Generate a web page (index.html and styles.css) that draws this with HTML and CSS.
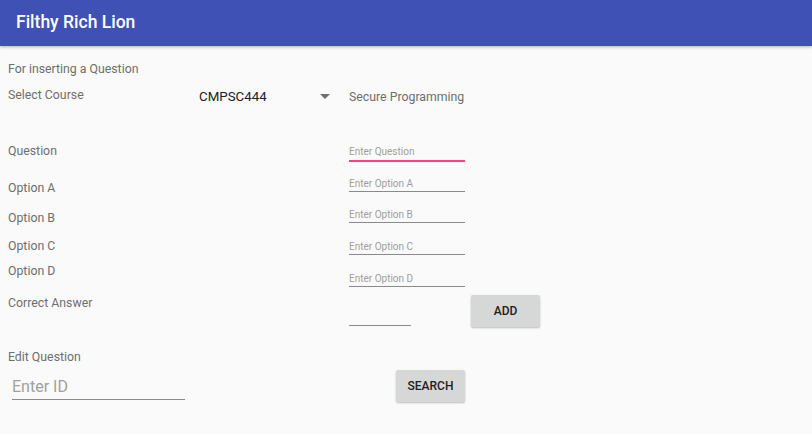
FILE: index.html
```html
<!DOCTYPE html>
<html>
<head>
<meta charset="utf-8">
<link rel="stylesheet" href="styles.css">
</head>
<body>
<header class="appbar"><span class="title">Filthy Rich Lion</span></header>
<main class="content">
  <section class="form">
    <div class="labels">
      <div class="label l-intro">For inserting a Question</div>
      <div class="course-row">
        <div class="label l-course">Select Course</div>
        <div class="spinner">
          <span class="spinner-text">CMPSC444</span>
          <svg class="spinner-arrow" width="10" height="5" viewBox="0 0 10 5"><path d="M0 0 L10 0 L5 5 Z" fill="#6f6f6f"/></svg>
        </div>
      </div>
      <div class="label l-question">Question</div>
      <div class="label l-a">Option A</div>
      <div class="label l-b">Option B</div>
      <div class="label l-c">Option C</div>
      <div class="label l-d">Option D</div>
      <div class="label l-answer">Correct Answer</div>
    </div>
    <div class="fields">
      <div class="course-name">Secure Programming</div>
      <div class="field f-question focused">Enter Question</div>
      <div class="field f-a">Enter Option A</div>
      <div class="field f-b">Enter Option B</div>
      <div class="field f-c">Enter Option C</div>
      <div class="field f-d">Enter Option D</div>
      <div class="answer-row">
        <div class="field f-answer"></div>
        <button class="btn btn-add">ADD</button>
      </div>
    </div>
  </section>
  <section class="edit">
    <div class="label l-edit">Edit Question</div>
    <div class="edit-row">
      <div class="id-field">Enter ID</div>
      <button class="btn btn-search">SEARCH</button>
    </div>
  </section>
</main>
</body>
</html>
```
FILE: styles.css
```css
* { box-sizing: border-box; }
html, body { margin: 0; padding: 0; }
body {
  width: 812px;
  height: 434px;
  overflow: hidden;
  background: #fafafa;
  font-family: Roboto, "Noto Sans", sans-serif;
}
.appbar {
  height: 46px;
  background: #3f51b5;
  display: flex;
  align-items: center;
  padding-left: 16px;
  box-shadow: 0 1px 3px rgba(0,0,0,0.3);
  position: relative;
  z-index: 1;
}
.title {
  color: #fff;
  font-size: 17.5px;
  font-weight: 500;
  margin-top: -3px;
}
.content { display: flex; flex-direction: column; }
.form { display: flex; }
.labels {
  width: 349px;
  padding-left: 8px;
  display: flex;
  flex-direction: column;
}
.label {
  font-size: 12.3px;
  line-height: 16px;
  color: #6e6e6e;
}
.l-intro { margin-top: 15px; }
.course-row { display: flex; align-items: center; margin-top: 10px; height: 16px; }
.l-course { width: 191px; }
.spinner { display: flex; align-items: center; width: 131px; justify-content: space-between; margin-top: 2px; }
.spinner-text { font-size: 13.3px; color: #212121; }
.l-question { margin-top: 40px; }
.l-a { margin-top: 21px; }
.l-b { margin-top: 14px; }
.l-c { margin-top: 12px; }
.l-d { margin-top: 9px; }
.l-answer { margin-top: 16px; }
.fields { display: flex; flex-direction: column; }
.course-name {
  margin-top: 43px;
  font-size: 12.3px;
  line-height: 16px;
  color: #6e6e6e;
}
.field {
  width: 116px;
  font-size: 10px;
  line-height: 14px;
  color: #9e9e9e;
  border-bottom: 1px solid #8a8a8a;
  height: 15px;
}
.field.focused { border-bottom: 2px solid #ff4081; height: 17px; margin-top: 40px; }
.f-a { margin-top: 15px; }
.f-b { margin-top: 16px; }
.f-c { margin-top: 17px; }
.f-d { margin-top: 17px; }
.answer-row { display: flex; align-items: flex-end; margin-top: 8px; }
.f-answer { width: 62px; margin-bottom: 1px; }
.btn {
  font-family: Roboto, "Noto Sans", sans-serif;
  font-size: 12px;
  font-weight: 500;
  color: #212121;
  background: #d6d7d7;
  border: none;
  border-radius: 2px;
  height: 32px;
  width: 69px;
  padding: 0;
  box-shadow: 0 1px 2px rgba(0,0,0,0.25);
}
.btn-add { margin-left: 60px; }
.edit { display: flex; flex-direction: column; padding-left: 8px; }
.l-edit { margin-top: 22px; }
.edit-row { display: flex; align-items: flex-start; }
.id-field {
  margin-left: 4px;
  margin-top: 12px;
  width: 173px;
  font-size: 16px;
  line-height: 20px;
  height: 23px;
  padding-bottom: 2px;
  color: #a0a0a0;
  border-bottom: 1px solid #8a8a8a;
}
.btn-search { margin-left: 211px; margin-top: 5px; }
```
